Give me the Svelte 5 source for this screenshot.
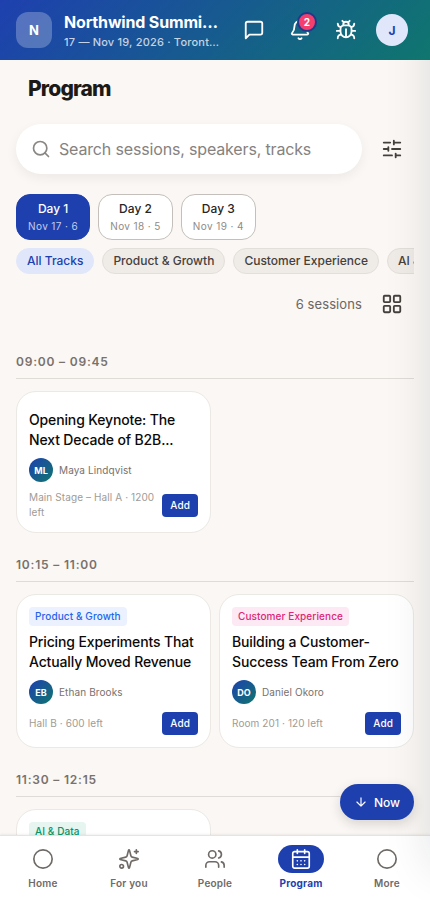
<script>
  const days = [
    { label: 'Day 1', date: 'Nov 17', count: 6 },
    { label: 'Day 2', date: 'Nov 18', count: 5 },
    { label: 'Day 3', date: 'Nov 19', count: 4 },
  ];

  const tracks = ['All Tracks', 'Product & Growth', 'Customer Experience', 'AI & Data'];

  const slots = [
    {
      time: '09:00 – 09:45',
      sessions: [
        { title: 'Opening Keynote: The Next Decade of B2B...', initials: 'ML', speaker: 'Maya Lindqvist', place: 'Main Stage – Hall A · 1200 left' },
      ],
    },
    {
      time: '10:15 – 11:00',
      sessions: [
        { track: 'Product & Growth', tone: 'blue', title: 'Pricing Experiments That Actually Moved Revenue', initials: 'EB', speaker: 'Ethan Brooks', place: 'Hall B · 600 left' },
        { track: 'Customer Experience', tone: 'pink', title: 'Building a Customer-Success Team From Zero', initials: 'DO', speaker: 'Daniel Okoro', place: 'Room 201 · 120 left' },
      ],
    },
    {
      time: '11:30 – 12:15',
      sessions: [{ track: 'AI & Data', tone: 'green' }],
    },
  ];

  const tabs = [
    { label: 'Home', icon: 'circle' },
    { label: 'For you', icon: 'sparkles' },
    { label: 'People', icon: 'people' },
    { label: 'Program', icon: 'calendar' },
    { label: 'More', icon: 'circle' },
  ];

  let activeDay = $state(0);
  let activeTrack = $state('All Tracks');
  let activeTab = $state('Program');
  let query = $state('');
  let added = $state([]);

  function toggle(title) {
    added = added.includes(title) ? added.filter((t) => t !== title) : [...added, title];
  }
</script>

{#snippet icon(name, size)}
  <svg class="icon" width={size} height={size} viewBox="0 0 24 24" aria-hidden="true">
    {#if name === 'chat'}
      <path d="M21 15a2 2 0 0 1-2 2H7l-4 4V5a2 2 0 0 1 2-2h14a2 2 0 0 1 2 2z" />
    {:else if name === 'bell'}
      <path d="M10.3 21a2 2 0 0 0 3.4 0" />
      <path d="M3.3 15.3A1 1 0 0 0 4 17h16a1 1 0 0 0 .7-1.7C19.4 14 18 12.5 18 8A6 6 0 0 0 6 8c0 4.5-1.4 6-2.7 7.3" />
    {:else if name === 'bug'}
      <path d="M12 20v-9M14 7a4 4 0 0 1 4 4v3a6 6 0 0 1-12 0v-3a4 4 0 0 1 4-4zM14.1 3.9 16 2M8 2l1.9 1.9M9 7.1V6a3 3 0 1 1 6 0v1.1M21 5a4 4 0 0 1-3.5 4M3 5a4 4 0 0 0 3.5 4M22 13h-4M6 13H2M21 21a4 4 0 0 0-3.8-4M3 21a4 4 0 0 1 3.8-4" />
    {:else if name === 'search'}
      <circle cx="11" cy="11" r="8" />
      <path d="m21 21-4.3-4.3" />
    {:else if name === 'sliders'}
      <path d="M21 5h-7M10 5H3M21 12h-9M8 12H3M21 19h-5M12 19H3M14 3v4M8 10v4M16 17v4" />
    {:else if name === 'grid'}
      <rect x="3" y="3" width="7" height="7" rx="1" />
      <rect x="14" y="3" width="7" height="7" rx="1" />
      <rect x="14" y="14" width="7" height="7" rx="1" />
      <rect x="3" y="14" width="7" height="7" rx="1" />
    {:else if name === 'down'}
      <path d="M12 5v14M19 12l-7 7-7-7" />
    {:else if name === 'circle'}
      <circle cx="12" cy="12" r="10" />
    {:else if name === 'sparkles'}
      <path d="M9.94 15.5A2 2 0 0 0 8.5 14.06l-6.14-1.58a.5.5 0 0 1 0-.96L8.5 9.94A2 2 0 0 0 9.94 8.5l1.58-6.14a.5.5 0 0 1 .96 0L14.06 8.5A2 2 0 0 0 15.5 9.94l6.14 1.58a.5.5 0 0 1 0 .96L15.5 14.06a2 2 0 0 0-1.44 1.44l-1.58 6.14a.5.5 0 0 1-.96 0zM20 2v4M22 4h-4" />
      <circle cx="4" cy="20" r="2" />
    {:else if name === 'people'}
      <path d="M16 21v-2a4 4 0 0 0-4-4H6a4 4 0 0 0-4 4v2M22 21v-2a4 4 0 0 0-3-3.87M16 3.13a4 4 0 0 1 0 7.75" />
      <circle cx="9" cy="7" r="4" />
    {:else if name === 'calendar'}
      <rect x="3" y="4" width="18" height="18" rx="2" />
      <path d="M8 2v4M16 2v4M3 10h18M8 14h.01M12 14h.01M16 14h.01M8 18h.01M12 18h.01M16 18h.01" />
    {/if}
  </svg>
{/snippet}

<div class="app">
  <header class="topbar">
    <div class="logo">N</div>
    <div class="event">
      <div class="event-name">Northwind Summit 2026</div>
      <div class="event-meta">17 — Nov 19, 2026 · Toronto, Canada</div>
    </div>
    <div class="actions">
      <button class="action" aria-label="Messages">{@render icon('chat', 22)}</button>
      <button class="action" aria-label="Notifications">
        {@render icon('bell', 22)}
        <span class="badge">2</span>
      </button>
      <button class="action" aria-label="Report a bug">{@render icon('bug', 22)}</button>
      <button class="profile" aria-label="Profile">J</button>
    </div>
  </header>

  <main>
    <h1>Program</h1>

    <div class="search-row">
      <label class="search">
        {@render icon('search', 20)}
        <input type="text" aria-label="Search" placeholder="Search sessions, speakers, tracks" bind:value={query} />
      </label>
      <button class="tool" aria-label="Filters">{@render icon('sliders', 22)}</button>
    </div>

    <div class="days">
      {#each days as day, i}
        <button class="day" class:active={activeDay === i} onclick={() => (activeDay = i)}>
          <span>{day.label}</span>
          <small>{day.date} · {day.count}</small>
        </button>
      {/each}
    </div>

    <div class="tracks">
      {#each tracks as track}
        <button class="chip" class:active={activeTrack === track} onclick={() => (activeTrack = track)}>{track}</button>
      {/each}
    </div>

    <div class="count-row">
      <span>{days[activeDay].count} sessions</span>
      <button class="tool" aria-label="Change view">{@render icon('grid', 22)}</button>
    </div>

    {#each slots as slot}
      <section>
        <h2>{slot.time}</h2>
        <div class="cards">
          {#each slot.sessions as s}
            <article class="card">
              <div class="tags">
                {#if s.track}<span class="tag {s.tone}">{s.track}</span>{/if}
              </div>
              <h3>{s.title}</h3>
              {#if s.speaker}
                <div class="speaker">
                  <span class="avatar">{s.initials}</span>
                  <span>{s.speaker}</span>
                </div>
                <div class="foot">
                  <span class="place">{s.place}</span>
                  <button class="add" onclick={() => toggle(s.title)}>{added.includes(s.title) ? 'Added' : 'Add'}</button>
                </div>
              {/if}
            </article>
          {/each}
        </div>
      </section>
    {/each}
  </main>

  <nav>
    {#each tabs as tab}
      <button class="tab" class:active={activeTab === tab.label} onclick={() => (activeTab = tab.label)}>
        <span class="pill">{@render icon(tab.icon, 22)}</span>
        {tab.label}
      </button>
    {/each}
  </nav>

  <button class="now">{@render icon('down', 14)} Now</button>
  <div class="drawer"></div>
</div>

<style>
  :global(body) { margin: 0; background: #faf7f4; }

  .app {
    position: relative;
    height: 100vh;
    display: flex;
    flex-direction: column;
    overflow: hidden;
    background: #faf7f4;
    color: #1c1917;
    font-family: Inter, 'Liberation Sans', sans-serif;
  }
  button {
    font: inherit;
    letter-spacing: inherit;
    color: inherit;
    padding: 0;
    border: none;
    background: none;
    cursor: pointer;
  }
  .icon {
    display: block;
    flex-shrink: 0;
    fill: none;
    stroke: currentColor;
    stroke-width: 2;
    stroke-linecap: round;
    stroke-linejoin: round;
  }

  /* ── Top bar ── */
  .topbar {
    position: relative;
    z-index: 3;
    display: flex;
    align-items: center;
    flex-shrink: 0;
    height: 60px;
    box-sizing: border-box;
    padding: 0 22px 0 16px;
    gap: 12px;
    background: linear-gradient(135deg, #1e40af, #0f766e);
    color: #fff;
  }
  .logo {
    display: grid;
    place-items: center;
    flex-shrink: 0;
    width: 36px;
    height: 36px;
    border-radius: 12px;
    background: rgba(255, 255, 255, 0.25);
    font-size: 13px;
    font-weight: 700;
  }
  .event { flex: 1; min-width: 0; padding-top: 4px; }
  .event-name, .event-meta {
    overflow: hidden;
    text-overflow: ellipsis;
    white-space: nowrap;
  }
  .event-name {
    font-size: 16px;
    line-height: 20px;
    font-weight: 700;
    letter-spacing: -0.01em;
  }
  .event-meta {
    font-size: 11px;
    line-height: 20px;
    font-weight: 500;
    letter-spacing: 0.2px;
    color: rgba(255, 255, 255, 0.75);
  }
  .actions { display: flex; align-items: center; gap: 6px; }
  .action {
    position: relative;
    display: grid;
    place-items: center;
    width: 40px;
    height: 40px;
  }
  .badge {
    position: absolute;
    top: 2px;
    right: 3px;
    min-width: 16px;
    height: 16px;
    border: 2px solid #1e3a8a;
    border-radius: 10px;
    background: #f43f6e;
    font-size: 10px;
    line-height: 16px;
    font-weight: 700;
  }
  .profile {
    width: 32px;
    height: 32px;
    margin-left: 4px;
    border-radius: 50%;
    background: #e0e7fa;
    color: #1e40af;
    font-size: 12px;
    font-weight: 700;
  }

  /* ── Page ── */
  main {
    flex: 1;
    min-height: 0;
    overflow-y: auto;
    scrollbar-width: none;
    padding: 0 16px;
  }
  h1 {
    margin: 16px 12px 22px;
    font-size: 21px;
    line-height: 26px;
    font-weight: 800;
    letter-spacing: -0.04em;
  }
  .search-row { display: flex; align-items: center; gap: 8px; }
  .search {
    flex: 1;
    min-width: 0;
    display: flex;
    align-items: center;
    gap: 8px;
    height: 50px;
    box-sizing: border-box;
    padding: 0 15px;
    border-radius: 25px;
    background: #fff;
    box-shadow: 0 4px 12px rgba(28, 25, 23, 0.06);
    color: #8a8683;
  }
  .search input {
    flex: 1;
    min-width: 0;
    padding: 0;
    border: none;
    outline: none;
    background: none;
    font: inherit;
    font-size: 16px;
    letter-spacing: -0.01em;
    color: #1c1917;
  }
  .search input::placeholder { color: #85827f; }
  .tool {
    display: grid;
    place-items: center;
    width: 44px;
    height: 44px;
    color: #44403c;
  }

  .days { display: flex; gap: 8px; margin-top: 20px; }
  .day {
    display: flex;
    flex-direction: column;
    align-items: center;
    padding: 5px 11px;
    border: 1px solid #c4bfba;
    border-radius: 14px;
    background: #fff;
    color: #292524;
    font-size: 12px;
    line-height: 18px;
    font-weight: 500;
  }
  .day small {
    font-size: 10px;
    line-height: 16px;
    font-weight: 400;
    letter-spacing: 0.4px;
    color: #8f8b87;
  }
  .day.active { background: #1e40af; border-color: #1e40af; color: #fff; }
  .day.active small { color: #c3cdec; }

  .tracks { display: flex; gap: 8px; margin-top: 8px; overflow: hidden; }
  .chip {
    flex-shrink: 0;
    padding: 3px 10px;
    border: 1px solid #e3ded9;
    border-radius: 13px;
    background: #efebe6;
    color: #44403c;
    font-size: 12px;
    line-height: 18px;
    font-weight: 500;
  }
  .chip.active { background: #e0e7fa; border-color: #e0e7fa; color: #1e40af; }

  .count-row {
    display: flex;
    align-items: center;
    justify-content: flex-end;
    gap: 8px;
    margin: 8px 0 27px;
    font-size: 13px;
    letter-spacing: 0.1px;
    color: #6b6661;
  }

  /* ── Sessions ── */
  section { margin-bottom: 23px; }
  h2 {
    margin: 0 0 12px;
    padding: 1px 0 8px;
    border-bottom: 1px solid #dfdbd7;
    font-size: 12px;
    line-height: 16px;
    font-weight: 600;
    letter-spacing: 0.8px;
    color: #78716c;
  }
  .cards { display: grid; grid-template-columns: 1fr 1fr; gap: 8px; }
  .card {
    min-width: 0;
    padding: 12px;
    border: 1px solid #ece8e4;
    border-radius: 20px;
    background: #fff;
  }
  .tags { display: flex; margin-bottom: 6px; }
  .tag {
    padding: 0 6px;
    border-radius: 4px;
    font-size: 10px;
    line-height: 19px;
    font-weight: 500;
    letter-spacing: 0.1px;
  }
  .tag.blue { background: #ebf1fe; color: #2563eb; }
  .tag.pink { background: #fce9f3; color: #db2777; }
  .tag.green { background: #e6f5f0; color: #059669; }
  h3 {
    min-height: 40px;
    margin: 0 0 8px;
    font-size: 14px;
    line-height: 20px;
    font-weight: 500;
    letter-spacing: -0.01em;
    color: #0c0a09;
  }
  .speaker {
    display: flex;
    align-items: center;
    gap: 6px;
    font-size: 10px;
    letter-spacing: 0.1px;
    color: #78716c;
  }
  .avatar {
    display: grid;
    place-items: center;
    width: 24px;
    height: 24px;
    border-radius: 50%;
    background: linear-gradient(135deg, #1e40af, #0f766e);
    color: #fff;
    font-size: 9px;
    font-weight: 700;
  }
  .foot {
    display: flex;
    align-items: center;
    justify-content: space-between;
    gap: 6px;
    margin-top: 8px;
  }
  .place {
    font-size: 10px;
    line-height: 15px;
    letter-spacing: 0.1px;
    color: #a09b96;
  }
  .add {
    flex-shrink: 0;
    padding: 0 8px;
    border-radius: 4px;
    background: #1e40af;
    color: #fff;
    font-size: 10px;
    line-height: 23px;
    font-weight: 500;
    letter-spacing: 0.1px;
  }

  /* ── Bottom nav ── */
  nav {
    display: flex;
    flex-shrink: 0;
    border-top: 1px solid #e7e3df;
    background: #fff;
    box-shadow: 0 -1px 2px rgba(28, 25, 23, 0.06);
    z-index: 1;
  }
  .tab {
    flex: 1;
    display: flex;
    flex-direction: column;
    align-items: center;
    gap: 2px;
    padding: 9px 0;
    font-size: 10px;
    line-height: 16px;
    font-weight: 600;
    letter-spacing: 0.2px;
    color: #6f6a66;
  }
  .tab .icon { stroke-width: 1.8; }
  .pill {
    display: grid;
    place-items: center;
    width: 46px;
    height: 28px;
    border-radius: 14px;
  }
  .tab.active { color: #1e40af; font-weight: 700; }
  .tab.active .pill { background: #1e40af; color: #fff; }

  .now {
    position: absolute;
    right: 16px;
    bottom: 80px;
    z-index: 4;
    display: flex;
    align-items: center;
    gap: 6px;
    height: 36px;
    padding: 0 14px;
    border-radius: 18px;
    background: #1e40af;
    box-shadow: 0 4px 12px rgba(28, 25, 23, 0.16);
    color: #fff;
    font-size: 12px;
    font-weight: 500;
  }

  /* closed side drawer, parked past the right edge */
  .drawer {
    position: absolute;
    z-index: 2;
    top: 0;
    bottom: 32px;
    left: 100%;
    width: 320px;
    box-shadow: 0 0 44px rgba(15, 23, 42, 0.12);
    pointer-events: none;
  }
</style>
